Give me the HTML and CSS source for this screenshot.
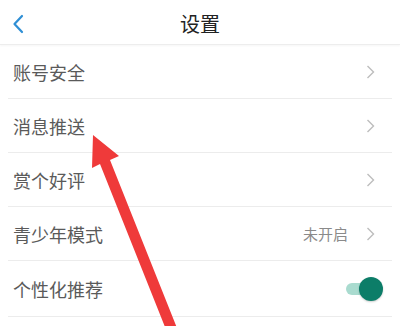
FILE: index.html
```html
<!DOCTYPE html>
<html lang="zh">
<head>
<meta charset="utf-8">
<link rel="stylesheet" href="styles.css">
</head>
<body>
<div class="page">
  <header class="topbar">
    <svg class="back" width="12" height="20" viewBox="0 0 12 20"><path d="M10 2 L2.5 10 L10 18" fill="none" stroke="#2f8fd5" stroke-width="2.2" stroke-linecap="round" stroke-linejoin="round"/></svg>
    <div class="title">设置</div>
  </header>
  <ul class="list">
    <li class="row"><span class="label">账号安全</span><span class="right"><svg class="chev" width="9" height="14" viewBox="0 0 9 14"><path d="M1.5 1 L7.5 7 L1.5 13" fill="none" stroke="#bdbdbd" stroke-width="1.4"/></svg></span></li>
    <li class="row"><span class="label">消息推送</span><span class="right"><svg class="chev" width="9" height="14" viewBox="0 0 9 14"><path d="M1.5 1 L7.5 7 L1.5 13" fill="none" stroke="#bdbdbd" stroke-width="1.4"/></svg></span></li>
    <li class="row"><span class="label">赏个好评</span><span class="right"><svg class="chev" width="9" height="14" viewBox="0 0 9 14"><path d="M1.5 1 L7.5 7 L1.5 13" fill="none" stroke="#bdbdbd" stroke-width="1.4"/></svg></span></li>
    <li class="row"><span class="label">青少年模式</span><span class="right"><span class="value">未开启</span><svg class="chev" width="9" height="14" viewBox="0 0 9 14"><path d="M1.5 1 L7.5 7 L1.5 13" fill="none" stroke="#bdbdbd" stroke-width="1.4"/></svg></span></li>
    <li class="row last"><span class="label">个性化推荐</span><span class="right"><span class="toggle"><span class="knob"></span></span></span></li>
  </ul>
  <svg class="arrow" width="400" height="326" viewBox="0 0 400 326"><polygon points="93,135 119,156 110,160 177,328 167,332 100,164 92,168" fill="#ef3a3a"/></svg>
</div>
</body>
</html>
```
FILE: styles.css
```css
html, body {
  margin: 0;
  padding: 0;
  background: #fff;
}
.page {
  position: relative;
  width: 400px;
  height: 326px;
  overflow: hidden;
  font-family: "Noto Sans CJK SC", "Noto Sans", sans-serif;
}
.topbar {
  height: 45px;
  display: flex;
  align-items: center;
  justify-content: center;
  position: relative;
  padding-top: 4px;
  box-sizing: border-box;
  border-bottom: 1px solid #ededed;
  box-shadow: 0 1px 2px rgba(0,0,0,0.04);
}
.back {
  position: absolute;
  left: 12px;
  top: 14px;
}
.title {
  font-size: 20px;
  color: #222;
  line-height: 1;
}
.list {
  list-style: none;
  margin: 0 8px;
  padding: 0;
}
.row {
  height: 53px;
  border-bottom: 1px solid #ececec;
  display: flex;
  align-items: center;
  justify-content: space-between;
  padding: 0 17px 0 5px;
}
.row.last {
  height: 55px;
}
.label {
  font-size: 18px;
  color: #5a5a5a;
  line-height: 1;
}
.right {
  display: flex;
  align-items: center;
}
.value {
  font-size: 15px;
  color: #8a8a8a;
  margin-right: 18px;
}
.chev {
  display: block;
}
.toggle {
  position: relative;
  width: 38px;
  height: 24px;
  margin-right: -9px;
  display: block;
}
.toggle::before {
  content: "";
  position: absolute;
  left: 0;
  top: 6px;
  width: 31px;
  height: 12px;
  border-radius: 6px;
  background: #a9dbcf;
}
.knob {
  position: absolute;
  right: 1px;
  top: 0;
  width: 24px;
  height: 24px;
  border-radius: 50%;
  background: #0c7d68;
  box-shadow: 0 1px 2px rgba(0,0,0,0.2);
}
.arrow {
  position: absolute;
  left: 0;
  top: 0;
  pointer-events: none;
}
```
